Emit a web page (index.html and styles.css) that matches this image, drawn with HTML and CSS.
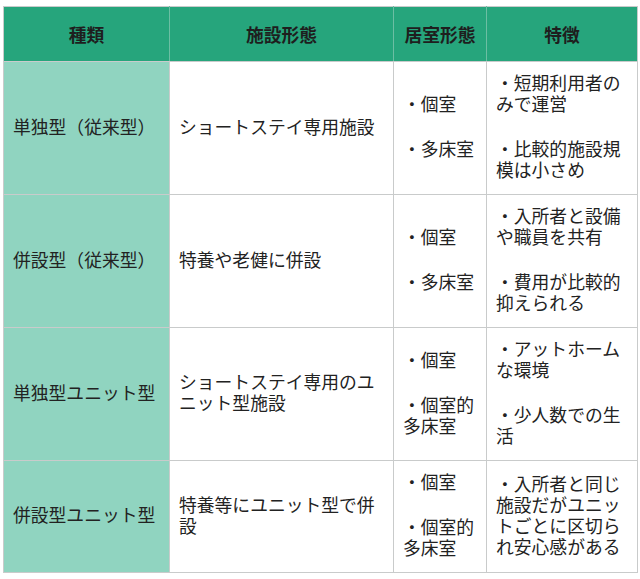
FILE: index.html
```html
<!DOCTYPE html>
<html lang="ja">
<head>
<meta charset="utf-8">
<link rel="stylesheet" href="styles.css">
</head>
<body>
<div class="wrap">
<table class="tbl">
  <colgroup>
    <col class="c1"><col class="c2"><col class="c3"><col class="c4">
  </colgroup>
  <thead>
    <tr><th>種類</th><th>施設形態</th><th>居室形態</th><th>特徴</th></tr>
  </thead>
  <tbody>
    <tr>
      <td class="kind">単独型（従来型）</td>
      <td>ショートステイ専用施設</td>
      <td><div class="item">・個室</div><div class="item">・多床室</div></td>
      <td><div class="item">・短期利用者のみで運営</div><div class="item">・比較的施設規模は小さめ</div></td>
    </tr>
    <tr>
      <td class="kind">併設型（従来型）</td>
      <td>特養や老健に併設</td>
      <td><div class="item">・個室</div><div class="item">・多床室</div></td>
      <td><div class="item">・入所者と設備や職員を共有</div><div class="item">・費用が比較的抑えられる</div></td>
    </tr>
    <tr>
      <td class="kind">単独型ユニット型</td>
      <td>ショートステイ専用のユニット型施設</td>
      <td><div class="item">・個室</div><div class="item">・個室的多床室</div></td>
      <td><div class="item">・アットホームな環境</div><div class="item">・少人数での生活</div></td>
    </tr>
    <tr>
      <td class="kind">併設型ユニット型</td>
      <td>特養等にユニット型で併設</td>
      <td><div class="item">・個室</div><div class="item">・個室的多床室</div></td>
      <td><div class="item">・入所者と同じ施設だがユニットごとに区切られ安心感がある</div></td>
    </tr>
  </tbody>
</table>
</div>
</body>
</html>
```

FILE: styles.css
```css
html, body {
  margin: 0;
  padding: 0;
  background: #ffffff;
}
.wrap {
  padding: 6px 3px 0 3px;
}
.tbl {
  border-collapse: collapse;
  table-layout: fixed;
  width: 634px;
  font-family: "Noto Sans CJK JP", "Noto Sans", sans-serif;
  font-size: 17.8px;
  line-height: 21px;
  color: #222222;
}
.c1 { width: 166px; }
.c2 { width: 224px; }
.c3 { width: 93px; }
.c4 { width: 151px; }
.tbl th {
  background: #26a57c;
  font-weight: 700;
  text-align: center;
  padding: 17px 4px 16px 4px;
  border: 1px solid #c9cbcb;
  border-left-color: #6cbea3;
  border-right-color: #6cbea3;
  color: #1e1e1e;
}
.tbl th:first-child { border-left-color: #c9cbcb; }
.tbl th:last-child { border-right-color: #c9cbcb; }
.tbl td {
  border: 1px solid #c9cbcb;
  padding: 10px 9px 14px 9px;
  vertical-align: middle;
  text-align: left;
}
.tbl td.kind {
  background: #90d4c0;
}
.item + .item {
  margin-top: 24px;
}
```
